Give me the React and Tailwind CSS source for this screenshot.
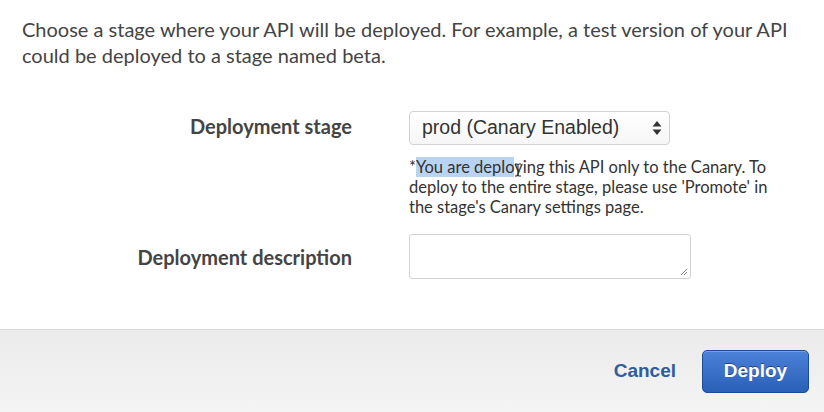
import React from 'react';

const App = () => {
  return (
    <div className="w-[824px] h-[412px] bg-white flex flex-col overflow-hidden font-['Lato',sans-serif]">
      <div className="flex-1 px-[22px] pt-[16px]">
        <p className="text-[20px] leading-[26px] text-[#444] w-[790px]">
          Choose a stage where your API will be deployed. For example, a test version of your API
          could be deployed to a stage named beta.
        </p>

        <div className="mt-[43px] grid grid-cols-[330px_1fr] gap-x-[57px]">
          <div className="h-[30px] flex items-center justify-end text-[20px] font-bold text-[#444]">
            Deployment stage
          </div>
          <div>
            <div className="w-[261px] h-[34px] border border-[#d2d2d2] rounded-[4px] bg-gradient-to-b from-white to-[#f6f6f6] flex items-center justify-between pl-[12px] pr-[7px] font-['Liberation_Sans',Arial,sans-serif] text-[19.5px] text-[#333]">
              <span>prod (Canary Enabled)</span>
              <svg width="10" height="16" viewBox="0 0 10 16" className="text-[#333]">
                <path d="M5 1 L9.5 6.5 L0.5 6.5 Z" fill="currentColor" />
                <path d="M5 15 L9.5 9.5 L0.5 9.5 Z" fill="currentColor" />
              </svg>
            </div>
            <div className="relative mt-[12px] w-[385px] text-[16.5px] leading-[20px] text-[#333]">
              *<span className="bg-[#b9d3f2]">You are deplo</span>ying this API only to the Canary. To deploy to the entire stage, please use 'Promote' in the stage's Canary settings page.
              <svg width="8" height="14" viewBox="0 0 8 14" className="absolute left-[105px] top-[6px]">
                <path d="M1 1 H3 Q4 1 4 2 V12 Q4 13 3 13 H1 M7 1 H5 Q4 1 4 2 M4 12 Q4 13 5 13 H7" stroke="#222" strokeWidth="1" fill="none" />
              </svg>
            </div>
          </div>

          <div className="mt-[17px] h-[45px] flex items-center justify-end text-[20px] font-bold text-[#444]">
            Deployment description
          </div>
          <div className="mt-[17px]">
            <div className="relative w-[282px] h-[45px] border border-[#d2d2d2] rounded-[3px] bg-white">
              <svg width="8" height="8" viewBox="0 0 8 8" className="absolute right-[2px] bottom-[2px]">
                <path d="M7 1 L1 7 M7 4 L4 7" stroke="#888" strokeWidth="1" />
              </svg>
            </div>
          </div>
        </div>
      </div>

      <div className="h-[83px] border-t border-[#dcdcdc] bg-gradient-to-b from-[#ebebeb] to-[#f4f4f4] flex items-center justify-end pr-[15px] gap-[26px] font-['Liberation_Sans',Arial,sans-serif]">
        <span className="text-[19px] font-bold text-[#2f5c9c]">Cancel</span>
        <button className="w-[107px] h-[43px] rounded-[5px] border border-[#1d4a94] bg-gradient-to-b from-[#4b82d8] to-[#2a5fb6] text-white text-[19px] font-bold [text-shadow:0_-1px_0_rgba(0,0,0,0.45)] shadow-[inset_0_1px_0_rgba(255,255,255,0.25)]">
          Deploy
        </button>
      </div>
    </div>
  );
};

export default App;
